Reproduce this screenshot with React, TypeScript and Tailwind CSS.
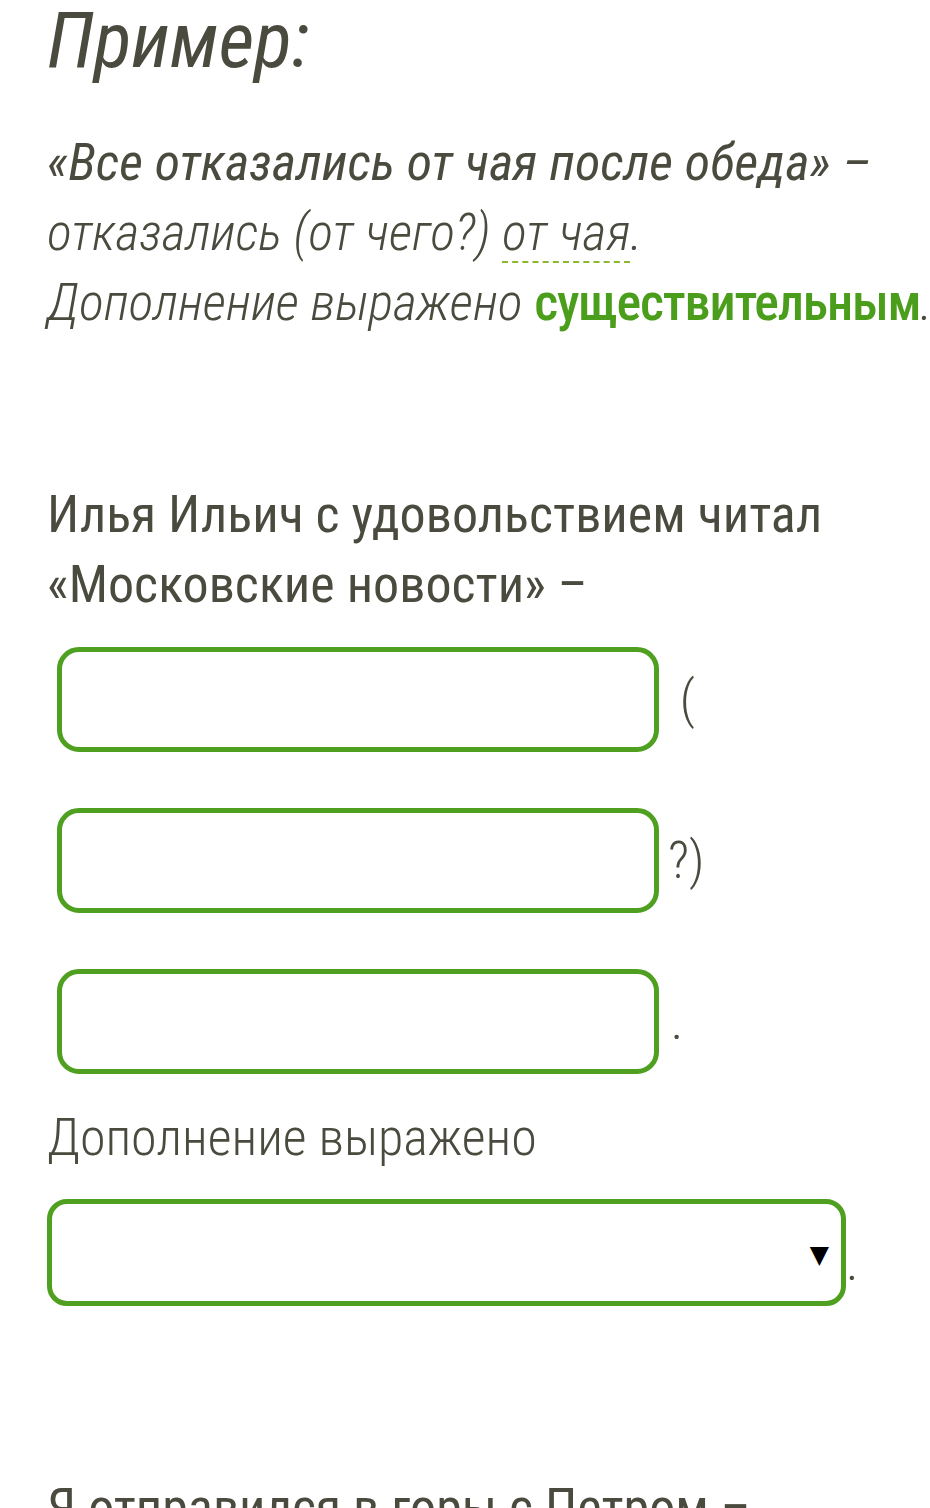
import React from 'react';

const FONT = "font-['Roboto_Condensed','Roboto',sans-serif] font-stretch-condensed";

function Blank({ after, pad }: { after: string; pad?: boolean }) {
  return (
    <div className="flex items-center">
      <span className="block w-[602px] h-[105px] ml-[10px] border-[5px] border-[#4fa021] rounded-[22px] bg-white" />
      <span className={`font-light text-[52px] leading-[70px] whitespace-pre ${pad ? 'pl-[9px]' : ''}`}>{after}</span>
    </div>
  );
}

export default function App() {
  return (
    <div className={`${FONT} min-h-screen bg-white text-[#4a4a3e] pl-[47px] overflow-hidden`}>
      {/* Example block */}
      <h1 className="mt-[2px] text-[78px] leading-[78px] italic font-normal">Пример:</h1>

      <div className="mt-[48px] text-[52px] leading-[70px] italic whitespace-nowrap">
        <p className="font-normal">«Все отказались от чая после обеда» –</p>
        <p className="font-light">
          отказались (от чего?){' '}
          <span className="underline decoration-dashed decoration-2 decoration-[#8cb82e] underline-offset-[11px]">от чая</span>.
        </p>
        <p className="font-light">
          Дополнение выражено{' '}
          <span className="not-italic font-medium tracking-[-1.2px] text-[#4b9e1b]">существительным</span>.
        </p>
      </div>

      {/* Exercise */}
      <div className="mt-[142px] text-[52px] leading-[70px] font-normal">
        <p>Илья Ильич с удовольствием читал</p>
        <p>«Московские новости» –</p>
      </div>

      <div className="mt-[27px] flex flex-col gap-[56px]">
        <Blank after=" (" pad />
        <Blank after="?)" pad />
        <Blank after=" ." />
      </div>

      <p className="mt-[29px] text-[52px] leading-[70px] font-light">Дополнение выражено</p>

      <div className="mt-[26px] flex items-end">
        <div className="w-[799px] h-[107px] border-[5px] border-[#4fa021] rounded-[20px] flex items-center justify-end pr-[12px] pt-[4px]">
          <span className="text-black text-[25px] leading-none font-['DejaVu_Sans',sans-serif] font-stretch-normal">▼</span>
        </div>
        <span className="font-light text-[52px] leading-[70px] mb-[8px]">.</span>
      </div>

      <p className="mt-[167px] text-[52px] leading-[70px] font-normal whitespace-nowrap">Я отправился в горы с Петром –</p>
    </div>
  );
}
